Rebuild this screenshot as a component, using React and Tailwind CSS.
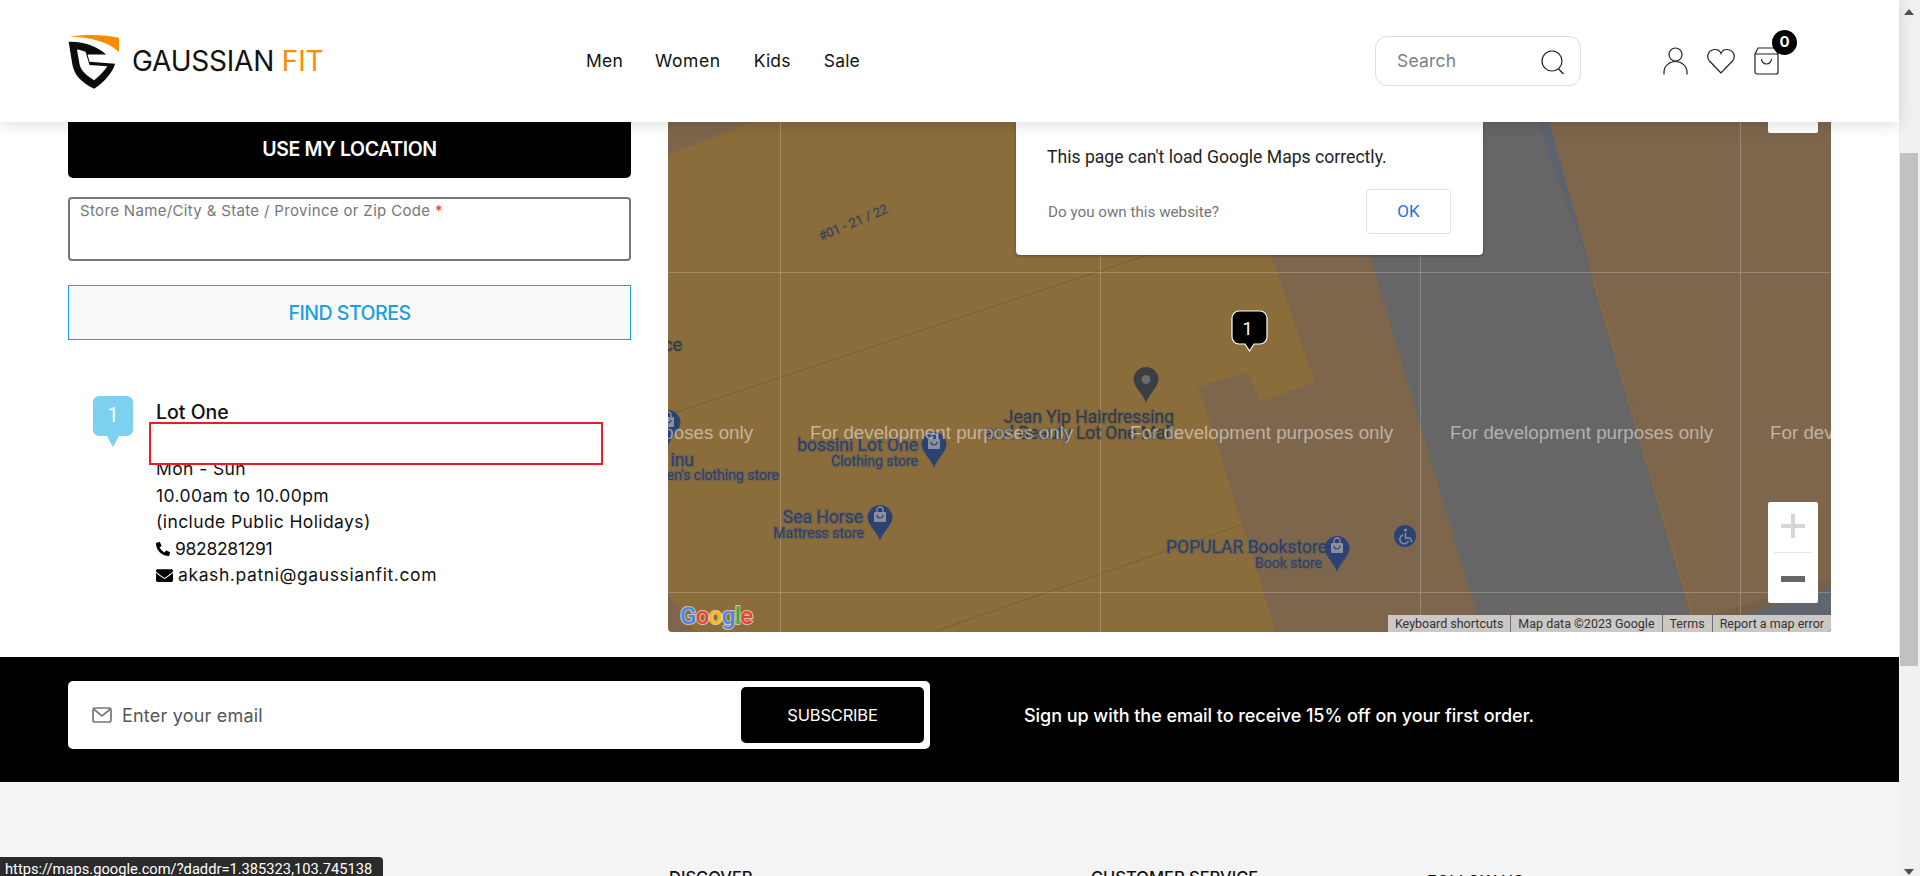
import React from "react";
import { FaPhoneAlt, FaEnvelope } from "react-icons/fa";

function Logo() {
  return (
    <svg width="53" height="60" viewBox="50 30 160 180" className="-ml-[1px] shrink-0">
      <path d="M58 47 C100 38 165 40 207 50 L207 93 C175 62 120 48 58 47 Z" fill="#fb8c00" />
      <path fillRule="evenodd" fill="#0b0b0b" d="M55 62 C100 60 140 75 168 100 L112 100 L118 122 L195 128 C190 150 165 182 132 204 C95 185 72 165 66 130 Z M80 85 L88 130 C92 150 110 165 132 178 C150 165 162 150 172 136 L118 132 L106 92 C98 89 90 86 80 85 Z" />
    </svg>
  );
}

function Pin({ x, y, color = "#2c4272", bag = true }) {
  return (
    <g transform={`translate(${x} ${y})`}>
      <path d="M0 36 C-2 28 -12.5 20 -12.5 12.5 A12.5 12.5 0 1 1 12.5 12.5 C12.5 20 2 28 0 36 Z" fill={color} />
      {bag ? (
        <g>
          <rect x="-6" y="7" width="12" height="10" rx="1" fill="#8a8f9c" />
          <path d="M-3 7 V5 A3 3 0 0 1 3 5 V7" stroke="#8a8f9c" strokeWidth="1.3" fill="none" />
          <path d="M-3 10 A3 3 0 0 0 3 10" stroke={color} strokeWidth="1.2" fill="none" />
        </g>
      ) : (
        <circle cx="0" cy="12.5" r="4.5" fill="#6b6b6b" />
      )}
    </g>
  );
}

function Label({ x, y, size = 17.5, anchor = "end", fill = "#2b3e69", children }) {
  return (
    <text x={x} y={y} textAnchor={anchor} fontSize={size} fill={fill} stroke="#5d5f5e" strokeOpacity="0.55" strokeWidth="2.5" paintOrder="stroke" className="font-['Roboto']">
      {children}
    </text>
  );
}

function MapCanvas() {
  const marks = [490, 810, 1130, 1450, 1770];
  return (
    <svg viewBox="668 122 1163 510" width="1163" height="510" className="block">
      <rect x="668" y="122" width="1163" height="510" fill="#7d664b" />
      <path d="M668 155 L753 122 L1271 122 L1271 255 L1315 382 L1260 402 L1247.5 372 L1198 387 L1213 432 L1276 632 L695 632 L668 594 Z" fill="#8b6c3b" />
      <path d="M1330 122 L1538 122 L1590 270 L1640 430 L1695 632 L1482 632 Z" fill="#666666" />
      <path d="M1538 122 L1549 122 L1592 275 L1590 270 Z" fill="#5c6370" />
      <path d="M1592 275 L1697 632" stroke="#8a6a3f" strokeWidth="2" fill="none" />
      <path d="M1831 578 L1711 615 L1711 632 L1831 632 Z" fill="#75604a" />
      <path d="M1831 588 L1735 618 L1735 632 L1831 632 Z" fill="#5f6670" />
      <path d="M668 415 L1148 255 M933 632 L1241 525" stroke="#7a6135" strokeWidth="1" fill="none" />
      <path d="M780.5 122 V632 M1100.5 122 V632 M1420.5 122 V632 M1740.5 122 V632 M668 272.5 H1831 M668 592.5 H1831" stroke="#ffffff" strokeOpacity="0.22" strokeWidth="1" />

      <text transform="translate(821 241) rotate(-23)" fontSize="13" fill="#3b3c3e" stroke="#6d6a5e" strokeOpacity="0.6" strokeWidth="2" paintOrder="stroke" className="font-['Roboto']">#01 - 21 / 22</text>
      <Label x={682} y={351} fill="#34373c">ce</Label>
      <Pin x={668} y={410} />
      <Label x={694} y={466}>inu</Label>
      <Label x={779} y={480} size={14}>en's clothing store</Label>
      <Pin x={1146} y={367} color="#3a3f46" bag={false} />
      <Label x={1174} y={423} fill="#35383d">Jean Yip Hairdressing</Label>
      <Label x={1174} y={439} fill="#35383d">and Beauty Lot One Mall</Label>
      <Label x={918} y={451}>bossini Lot One</Label>
      <Label x={918} y={466} size={14}>Clothing store</Label>
      <Pin x={934} y={432} />
      <Label x={863} y={523}>Sea Horse</Label>
      <Label x={864} y={538} size={14}>Mattress store</Label>
      <Pin x={880} y={505} />
      <Label x={1327} y={553}>POPULAR Bookstore</Label>
      <Label x={1322} y={568} size={14}>Book store</Label>
      <Pin x={1337} y={536} />
      <circle cx="1405" cy="536" r="11" fill="#2c4272" />
      <circle cx="1405.5" cy="530" r="1.6" fill="#8a8f9c" />
      <path d="M1405.5 533 V538 H1410 L1412 542 M1403 535 A4.5 4.5 0 1 0 1408.5 541" stroke="#8a8f9c" strokeWidth="1.4" fill="none" />

      {marks.map((x) => (
        <text key={x} x={x} y={439} fontSize="18.8" fill="#ffffff" fillOpacity="0.5" className="font-['Liberation_Sans']">For development purposes only</text>
      ))}

      <path d="M1239 311 H1260 A7 7 0 0 1 1267 318 V337 A7 7 0 0 1 1260 344 H1254 L1249.5 351 L1245 344 H1239 A7 7 0 0 1 1232 337 V318 A7 7 0 0 1 1239 311 Z" fill="#000000" stroke="#ffffff" strokeWidth="1.2" />
      <text x="1247.5" y="335" textAnchor="middle" fontSize="18" fill="#ffffff" className="font-['Roboto']">1</text>

      <text x="680" y="624" fontSize="24" fontWeight="500" stroke="#ffffff" strokeOpacity="0.6" strokeWidth="2" paintOrder="stroke" className="font-['Roboto']" letterSpacing="-0.6">
        <tspan fill="#4a86e8">G</tspan><tspan fill="#ea4335">o</tspan><tspan fill="#fbbc05">o</tspan><tspan fill="#4a86e8">g</tspan><tspan fill="#34a853">l</tspan><tspan fill="#ea4335">e</tspan>
      </text>
    </svg>
  );
}

function Attribution() {
  const items = ["Keyboard shortcuts", "Map data ©2023 Google", "Terms", "Report a map error"];
  return (
    <div className="absolute right-0 bottom-0 flex h-[17px] bg-[#cbc8c5] font-['Roboto'] text-[12.5px] leading-[17px] text-[#333333] rounded-br-[4px]">
      {items.map((t, i) => (
        <span key={t} className={`px-[7px] whitespace-nowrap ${i > 0 ? "border-l-[1px] border-[#6f6f6f]" : ""}`}>{t}</span>
      ))}
    </div>
  );
}

export default function App() {
  return (
    <div className="relative flex h-[876px] w-[1920px] overflow-hidden bg-white font-['Inter',sans-serif]">
      <div className="flex w-[1899px] shrink-0 flex-col">
        <header className="relative z-20 flex h-[122px] shrink-0 items-center bg-white pl-[68px] shadow-[0_2px_16px_rgba(0,0,0,0.14)]">
          <div className="flex w-[518px] shrink-0 items-center">
            <Logo />
            <span className="ml-[12px] whitespace-nowrap text-[28px] font-normal tracking-[-0.2px] text-[#111111]">GAUSSIAN <span className="text-[#fb8c00]">FIT</span></span>
          </div>
          <nav className="mt-[1px] flex w-[789px] shrink-0 gap-[33px] text-[17.5px] tracking-[0.2px] text-[#111111]">
            <span>Men</span>
            <span className="-ml-[1px] tracking-[0.6px]">Women</span>
            <span>Kids</span>
            <span>Sale</span>
          </nav>
          <div className="flex h-[50px] w-[206px] shrink-0 items-center justify-between rounded-[12px] border border-[#dddddd] pl-[21px] pr-[15px]">
            <span className="mt-[1px] text-[17.5px] tracking-[0.2px] text-[#7b7f86]">Search</span>
            <svg width="24" height="26" viewBox="0 0 24 26" fill="none" stroke="#222222" strokeWidth="1.2" className="mt-[4px]">
              <circle cx="11" cy="11" r="10" />
              <path d="M17.5 19 L22.5 24" />
            </svg>
          </div>
          <div className="relative ml-[82px] flex items-center">
            <svg width="25" height="28" viewBox="0 0 25 28" fill="none" stroke="#222222" strokeWidth="1.2">
              <circle cx="12.5" cy="7.5" r="6.5" />
              <path d="M1 27.5 V25 A11.5 10.5 0 0 1 24 25 V27.5" />
            </svg>
            <svg width="28" height="26" viewBox="0 0 28 26" fill="none" stroke="#222222" strokeWidth="1.2" className="ml-[19px]">
              <path d="M14 25 L2.5 13 C-1 9 1 2 7.5 1.5 C10.5 1.3 13 3 14 5.5 C15 3 17.5 1.3 20.5 1.5 C27 2 29 9 25.5 13 Z" />
            </svg>
            <svg width="25" height="28" viewBox="0 0 25 28" fill="none" stroke="#222222" strokeWidth="1.2" className="ml-[19px]">
              <path d="M1 7 L4 1 H21 L24 7 M1 7 H24 V25 A2 2 0 0 1 22 27 H3 A2 2 0 0 1 1 25 Z" />
              <path d="M7.5 12 A5 5 0 0 0 17.5 12" />
            </svg>
            <span className="absolute right-[-18px] top-[-17px] flex h-[25px] w-[25px] items-center justify-center rounded-full bg-black text-[15px] font-bold text-white">0</span>
          </div>
        </header>

        <main className="flex h-[535px] shrink-0 px-[68px]">
          <section className="relative w-[563px] shrink-0">
            <div className="flex h-[56px] items-center justify-center rounded-b-[5px] bg-black text-[19.5px] font-semibold tracking-[-0.4px] text-white">USE MY LOCATION</div>
            <div className="mt-[19px] h-[64px] rounded-[4px] border-[2px] border-[#767676] px-[10px] pt-[1px] text-[15px] tracking-[0.34px] text-[#777777]">
              Store Name/City &amp; State / Province or Zip Code <span className="text-[#e53935]">*</span>
            </div>
            <div className="mt-[24px] flex h-[55px] items-center justify-center border border-[#1a9fe0] bg-[#f9f9f9] pt-[3px] text-[19.5px] font-medium tracking-[-0.5px] text-[#1a9fe0]">FIND STORES</div>
            <div className="mt-[56px] flex pl-[25px]">
              <svg width="40" height="51" viewBox="0 0 40 51" className="shrink-0">
                <path d="M6 0 H34 A6 6 0 0 1 40 6 V34 A6 6 0 0 1 34 40 H26 L20 51 L14 40 H6 A6 6 0 0 1 0 34 V6 A6 6 0 0 1 6 0 Z" fill="#7dd0f0" />
                <text x="20" y="26" textAnchor="middle" fontSize="20" fill="#ffffff" className="font-['Roboto']">1</text>
              </svg>
              <div className="ml-[23px] text-[17.5px] leading-[26.5px] tracking-[0.4px] text-[#111111]">
                <div className="pt-[1px] text-[19.5px] font-medium leading-[30px] tracking-normal">Lot One</div>
                <div className="h-[25px]" />
                <div className="mt-[4px]">Mon - Sun</div>
                <div>10.00am to 10.00pm</div>
                <div>(include Public Holidays)</div>
                <div className="flex items-center tracking-[-0.3px]">
                  <FaPhoneAlt className="mr-[5px] h-[14px] w-[14px] text-black" />
                  9828281291
                </div>
                <div className="flex items-center tracking-[0.6px]">
                  <FaEnvelope className="mr-[5px] h-[17px] w-[17px] text-black" />
                  akash.patni@gaussianfit.com
                </div>
              </div>
            </div>
            <div className="absolute left-[81px] top-[300px] h-[43px] w-[454px] border-[2px] border-[#ed1c24] bg-white" />
          </section>

          <section className="relative ml-[37px] h-[510px] w-[1163px] shrink-0 overflow-hidden rounded-b-[4px]">
            <MapCanvas />
            <div className="absolute left-[348px] top-0 h-[133px] w-[467px] rounded-b-[4px] bg-white font-['Roboto'] shadow-[0_1px_3px_rgba(0,0,0,0.3)]">
              <p className="ml-[31px] mt-[23px] text-[17.6px] leading-[24px] text-[#222222]">This page can't load Google Maps correctly.</p>
              <div className="ml-[32px] mr-[32px] mt-[20px] flex items-center justify-between">
                <span className="mt-[2px] text-[15.2px] text-[#757575]">Do you own this website?</span>
                <span className="flex h-[45px] w-[85px] items-center justify-center rounded-[4px] border border-[#e2e2e2] text-[17px] text-[#1a73e8]">OK</span>
              </div>
            </div>
            <div className="absolute right-[13px] top-0 h-[11px] w-[50px] rounded-b-[2px] bg-white" />
            <div className="absolute bottom-[29px] right-[13px] flex h-[101px] w-[50px] flex-col items-center rounded-[2px] bg-white">
              <svg width="24" height="24" viewBox="0 0 24 24" className="mt-[12px]"><path d="M10 0 H14 V10 H24 V14 H14 V24 H10 V14 H0 V10 H10 Z" fill="#d6d6d6" /></svg>
              <div className="mt-[14px] h-px w-[38px] bg-[#e6e6e6]" />
              <div className="mt-[23px] h-[6px] w-[24px] bg-[#666666]" />
            </div>
            <Attribution />
          </section>
        </main>

        <div className="flex h-[125px] shrink-0 items-center bg-black pb-[9px] pl-[68px]">
          <div className="flex h-[68px] w-[862px] shrink-0 items-center rounded-[5px] bg-white pl-[24px] pr-[6px]">
            <svg width="20" height="16" viewBox="0 0 20 16" fill="none" stroke="#777777" strokeWidth="1.7">
              <rect x="1" y="1" width="18" height="14" rx="2" />
              <path d="M1.5 2 L10 9 L18.5 2" />
            </svg>
            <span className="ml-[10px] flex-1 text-[18px] tracking-[0.2px] text-[#555555]">Enter your email</span>
            <span className="flex h-[56px] w-[183px] items-center justify-center rounded-[5px] bg-black text-[16.5px] tracking-[-0.2px] text-white">SUBSCRIBE</span>
          </div>
          <p className="ml-[94px] whitespace-nowrap text-[18px] font-medium tracking-[-0.05px] text-white">Sign up with the email to receive 15% off on your first order.</p>
        </div>

        <footer className="flex flex-1 items-start bg-[#f4f4f4] pl-[669px] pt-[85px] text-[16.5px] font-medium leading-[20px] text-[#111111]">
          <span className="w-[422px] shrink-0">DISCOVER</span>
          <span className="w-[336px] shrink-0">CUSTOMER SERVICE</span>
          <span className="mt-[4px]">FOLLOW US</span>
        </footer>
      </div>

      <aside className="flex h-full w-[21px] shrink-0 flex-col items-center bg-[#f1f1f1] pr-[1px]">
        <svg width="10" height="6" viewBox="0 0 10 6" className="mt-[9px] shrink-0"><path d="M5 0 L10 6 H0 Z" fill="#505050" /></svg>
        <div className="mt-[138px] h-[513px] w-[18px] shrink-0 bg-[#c1c1c1]" />
        <svg width="10" height="6" viewBox="0 0 10 6" className="mt-[203px] shrink-0"><path d="M5 6 L10 0 H0 Z" fill="#505050" /></svg>
      </aside>

      <div className="absolute bottom-0 left-0 z-30 h-[19px] w-[383px] overflow-hidden rounded-tr-[4px] bg-[#2b2b2b] pl-[5px] pt-[3px] font-['Roboto'] text-[14.7px] leading-[19px] text-white">https://maps.google.com/?daddr=1.385323,103.745138</div>
    </div>
  );
}
